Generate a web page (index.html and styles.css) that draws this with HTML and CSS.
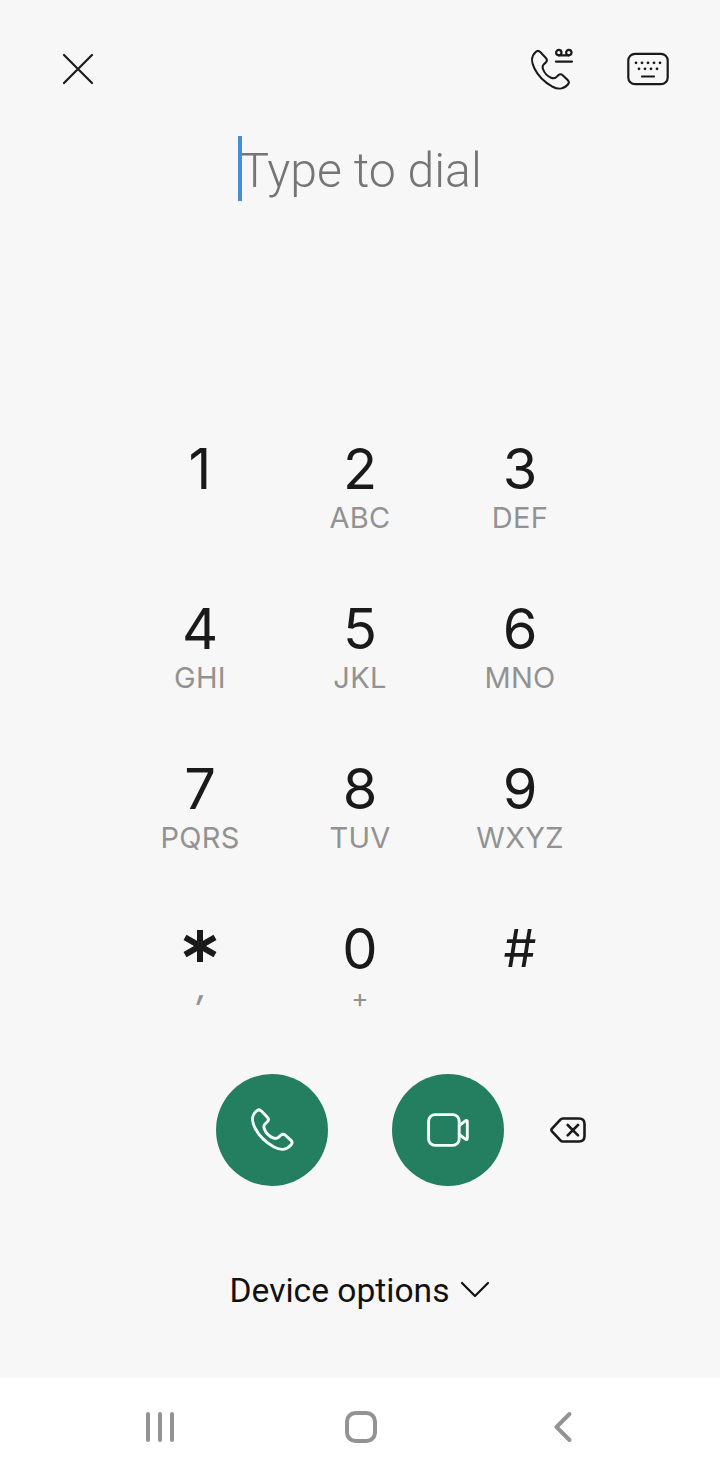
FILE: index.html
```
<!DOCTYPE html>
<html lang="en">
<head>
  <meta charset="UTF-8" />
  <meta name="viewport" content="width=device-width, initial-scale=1" />
  <title>Dialer</title>
  <link rel="stylesheet" href="styles.css">
</head>
<body>
  <main class="dialer">
    <header class="topbar">
      <button class="icon-btn" aria-label="Close">
        <svg width="32" height="32" viewBox="0 0 32 32"><path d="M2 2L30 30M30 2L2 30"/></svg>
      </button>
      <div class="topbar-actions">
        <button class="icon-btn" aria-label="Voicemail">
          <svg width="44" height="44" viewBox="0 0 44 44">
            <path transform="translate(-.3 2.2) scale(.93 .955)" d="M6.2 3.2C7.8 1.6 10 1.6 11.6 3.2L17.4 9.2C18.8 10.8 18.8 12.4 17.4 13.8L15 16C13.6 17.4 13.6 19 14.4 21C16 25.5 18.5 28 23 29.8C25.2 30.7 27 30.6 28.4 29.4L30.8 27.2C32.4 25.9 34 25.9 35.4 27.2L41 32.4C42.4 33.8 42.4 35.4 41 37C36 42.5 31 42.5 24 39C15 34 9 28 5 20C1.5 13 1 8 6.2 3.2Z"/>
            <circle cx="28.8" cy="5.6" r="2.7"/>
            <circle cx="38.8" cy="5.6" r="2.7"/>
            <path d="M28.8 8.3H38.8M26 14.6H42"/>
          </svg>
        </button>
        <button class="icon-btn" aria-label="Keyboard">
          <svg width="44" height="34" viewBox="0 0 44 34">
            <rect x="2.3" y="1.8" width="39.4" height="30.4" rx="6.8"/>
            <path class="dots" d="M10 10.8h0M16 10.8h0M22 10.8h0M28 10.8h0M34 10.8h0M13 16.8h0M19 16.8h0M25 16.8h0M31 16.8h0"/>
            <path d="M16 24.5H28"/>
          </svg>
        </button>
      </div>
    </header>

    <div class="display">
      <span class="caret"></span>
      <span class="placeholder">Type to dial</span>
    </div>

    <div class="keypad">
      <button class="key"><span class="digit">1</span></button>
      <button class="key"><span class="digit">2</span><span class="letters">ABC</span></button>
      <button class="key"><span class="digit">3</span><span class="letters">DEF</span></button>
      <button class="key"><span class="digit">4</span><span class="letters">GHI</span></button>
      <button class="key"><span class="digit">5</span><span class="letters">JKL</span></button>
      <button class="key"><span class="digit">6</span><span class="letters">MNO</span></button>
      <button class="key"><span class="digit">7</span><span class="letters">PQRS</span></button>
      <button class="key"><span class="digit">8</span><span class="letters">TUV</span></button>
      <button class="key"><span class="digit">9</span><span class="letters">WXYZ</span></button>
      <button class="key">
        <span class="digit"><svg class="star" width="34" height="34" viewBox="0 0 34 34"><path d="M17 1V33M2 8.4L32 25.6M32 8.4L2 25.6"/></svg></span>
        <span class="letters comma">,</span>
      </button>
      <button class="key"><span class="digit">0</span><span class="letters plus">+</span></button>
      <button class="key"><span class="digit hash">#</span></button>
    </div>

    <div class="actions">
      <button class="call-btn" aria-label="Call">
        <svg width="44" height="44" viewBox="0 0 44 44"><path d="M6.2 3.2C7.8 1.6 10 1.6 11.6 3.2L17.4 9.2C18.8 10.8 18.8 12.4 17.4 13.8L15 16C13.6 17.4 13.6 19 14.4 21C16 25.5 18.5 28 23 29.8C25.2 30.7 27 30.6 28.4 29.4L30.8 27.2C32.4 25.9 34 25.9 35.4 27.2L41 32.4C42.4 33.8 42.4 35.4 41 37C36 42.5 31 42.5 24 39C15 34 9 28 5 20C1.5 13 1 8 6.2 3.2Z"/></svg>
      </button>
      <button class="call-btn" aria-label="Video call">
        <svg width="44" height="36" viewBox="0 0 44 36">
          <rect x="2.6" y="2.6" width="30.6" height="30.8" rx="6.5"/>
          <path d="M33.3 13.5L39.4 8.8Q41.3 7.8 41.3 10V26Q41.3 28.2 39.4 27.2L33.3 22.5"/>
        </svg>
      </button>
      <button class="icon-btn backspace" aria-label="Delete">
        <svg width="36" height="26" viewBox="0 0 36 26"><path d="M12.8 1.5H29Q34.5 1.5 34.5 7V19Q34.5 24.5 29 24.5H12.8Q11.4 24.5 10.4 23.4L2 14.4Q.8 13 2 11.6L10.4 2.6Q11.4 1.5 12.8 1.5ZM17.7 8L28 18.3M28 8L17.7 18.3"/></svg>
      </button>
    </div>

    <button class="device-options">
      <span>Device options</span>
      <svg width="30" height="18" viewBox="0 0 30 18"><path d="M2 2L15 15L28 2"/></svg>
    </button>
  </main>

  <nav class="navbar">
    <svg width="32" height="34" viewBox="0 0 32 34"><path d="M4 4V30M16 4V30M28 4V30"/></svg>
    <svg class="home" width="34" height="34" viewBox="0 0 34 34"><rect x="3" y="3" width="28" height="28" rx="8.5"/></svg>
    <svg width="20" height="34" viewBox="0 0 20 34"><path d="M16.5 4L3.5 17L16.5 30"/></svg>
  </nav>
</body>
</html>
```

FILE: styles.css
```
:root {
  --bg: #f7f7f7;
  --ink: #1a1a1a;
  --muted: #8e8e8e;
  --green: #237f5f;
}

* {
  box-sizing: border-box;
}

body {
  margin: 0;
  width: 720px;
  height: 1474px;
  display: flex;
  flex-direction: column;
  background: #fff;
  font-family: Roboto, sans-serif;
  color: var(--ink);
}

button {
  margin: 0;
  padding: 0;
  border: none;
  background: none;
  font: inherit;
  color: inherit;
  cursor: pointer;
}

svg {
  display: block;
  fill: none;
  stroke: currentColor;
  stroke-width: 2.2;
  stroke-linecap: round;
  stroke-linejoin: round;
}

.dialer {
  height: 1378px;
  display: flex;
  flex-direction: column;
  align-items: center;
  background: var(--bg);
}

.topbar {
  width: 100%;
  height: 136px;
  padding: 2px 50px 0 62px;
  display: flex;
  justify-content: space-between;
  align-items: center;
}

.topbar-actions {
  display: flex;
  align-items: center;
  gap: 52px;
}

.icon-btn {
  display: flex;
  align-items: center;
  justify-content: center;
}

.dots {
  stroke-width: 2.8;
}

.display {
  height: 65px;
  display: flex;
  align-items: center;
}

.caret {
  width: 4px;
  height: 65px;
  margin-right: -2px;
  background: #438fdb;
}

.placeholder {
  font-size: 48.2px;
  font-weight: 300;
  line-height: 65px;
  color: #757575;
  white-space: nowrap;
  padding-top: 3px;
}

.keypad {
  margin-top: 219px;
  display: grid;
  grid-template-columns: repeat(3, 160px);
  grid-auto-rows: 160px;
  font-family: Inter, sans-serif;
}

.key {
  display: flex;
  flex-direction: column;
  align-items: center;
  padding-top: 16px;
}

.digit {
  height: 66px;
  font-size: 56px;
  line-height: 66px;
}

.letters {
  font-size: 29px;
  font-weight: 400;
  line-height: 32px;
  letter-spacing: 0.3px;
  color: #929292;
}

.star {
  margin-top: 13px;
  stroke-width: 6;
  stroke-linecap: butt;
}

.comma {
  padding-left: 4px;
  font-size: 34px;
  font-weight: 500;
  font-style: italic;
  line-height: 10px;
}

.plus {
  font-size: 26px;
  line-height: 32px;
}

.hash {
  font-size: 52px;
}

.actions {
  width: 100%;
  margin-top: 14px;
  padding-left: 216px;
  display: flex;
  align-items: center;
  gap: 64px;
}

.call-btn {
  width: 112px;
  height: 112px;
  display: flex;
  align-items: center;
  justify-content: center;
  border-radius: 50%;
  background: var(--green);
  color: #f4fffa;
}

.call-btn svg {
  stroke-width: 2.9;
}

.backspace {
  margin-left: -18px;
}

.backspace svg {
  stroke-width: 2.6;
}

.device-options {
  margin-top: 83px;
  display: flex;
  align-items: center;
  gap: 11px;
  font-size: 33.6px;
  line-height: 42px;
  color: #111;
}

.device-options span {
  padding-top: 1px;
}

.device-options svg {
  margin-bottom: 2px;
}

.navbar {
  height: 96px;
  padding: 2px 147px 0 144px;
  display: flex;
  align-items: center;
  justify-content: space-between;
  color: #939393;
}

.navbar svg {
  stroke-width: 4;
}

.navbar .home {
  margin-left: -8px;
}
```
